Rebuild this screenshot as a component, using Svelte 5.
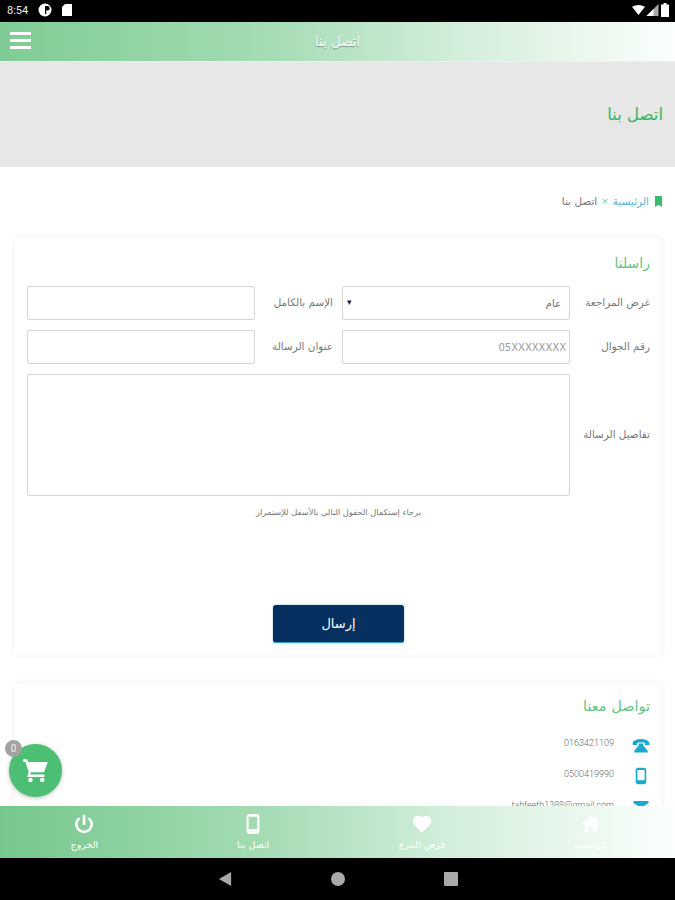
<script>
  let contacts = [
    { kind: "phone", value: "0163421109" },
    { kind: "mobile", value: "0500419990" },
    { kind: "mail", value: "tahfeeth1388@gmail.com" }
  ];
  let tabs = [
    { kind: "home", label: "الرئيسية" },
    { kind: "heart", label: "فرص التبرع" },
    { kind: "mobile", label: "اتصل بنا" },
    { kind: "power", label: "الخروج" }
  ];
</script>

{#snippet icon(kind)}
  {#if kind == "home"}
    <svg viewBox="0 0 24 24"><path d="M10 21v-6h4v6h5v-8.500h3L18.500 9.300V5h-2.500v2L12 3 2 12.500h3V21z"/></svg>
  {:else if kind == "heart"}
    <svg viewBox="0 0 24 24"><path d="M12 21.3l-1.500-1.300C5.400 15.400 2 12.300 2 8.500 2 5.400 4.400 3 7.500 3c1.700 0 3.400.8 4.500 2.100C13.100 3.800 14.800 3 16.500 3 19.600 3 22 5.400 22 8.500c0 3.800-3.400 6.900-8.500 11.500z"/></svg>
  {:else if kind == "mobile"}
    <svg viewBox="0 0 24 24"><path fill-rule="evenodd" d="M8 1h8c1.700 0 3 1.300 3 3v16c0 1.700-1.300 3-3 3H8c-1.700 0-3-1.300-3-3V4c0-1.700 1.300-3 3-3zM7.200 4v13.500h9.600V4z"/></svg>
  {:else if kind == "power"}
    <svg viewBox="0 0 24 24"><path d="M13.500 2h-3v11h3zm4.500 2.500l-2 2A7 7 0 1 1 8 6.500l-2-2a9.800 9.800 0 1 0 12 0z"/></svg>
  {:else if kind == "phone"}
    <svg viewBox="0 0 24 24"><path d="M12 4C7 4 3.500 5.500 1 8v4h5.500V9.200c1.700-.5 3.500-.7 5.500-.7s3.800.2 5.500.7V12H23V8c-2.500-2.500-6-4-11-4z"/><path d="M9 10h6v2.500l6 7V22H3v-2.500l6-7z"/></svg>
  {:else if kind == "mail"}
    <svg viewBox="0 0 24 24"><path d="M2 4h20v2.500l-10 7-10-7zM2 9.500l10 7 10-7V21H2z"/></svg>
  {/if}
{/snippet}

<div class="screen">
  <div class="status">
    <span class="clock">8:54</span>
    <svg class="st" viewBox="0 0 14 14"><circle cx="7" cy="7" r="6.500" fill="#fff"/><path d="M7 3h2.500a2 2 0 0 1 0 4.500H8.200V11H7z" fill="#000"/></svg>
    <svg class="st" viewBox="0 0 14 14"><path d="M5 1h7v12H2V4z" fill="#fff"/></svg>
    <span class="grow"></span>
    <svg class="wifi" viewBox="0 0 14 12"><path d="M0 2.500Q7-1.500 14 2.500L7 11.500z" fill="#fff"/></svg>
    <svg class="wifi" viewBox="0 0 12 12"><path d="M12 0v12H0z" fill="#aaa"/><path d="M7 5v7H0z" fill="#fff"/></svg>
    <svg class="batt" viewBox="0 0 8 14"><path d="M2.500 0h3v1.500H8V14H0V1.500h2.500z" fill="#fff"/></svg>
  </div>

  <header class="topbar">
    <div class="burger"><i></i><i></i><i></i></div>
    <span class="toptitle">اتصل بنا</span>
  </header>

  <main>
    <section class="hero"><h1>اتصل بنا</h1></section>

    <nav class="crumbs">
      <svg viewBox="0 0 10 12"><path d="M1 0h8v12L5 9.500 1 12z" fill="#3dbb6c"/></svg>
      <span class="home">الرئيسية</span>
      <span class="sep">×</span>
      <span>اتصل بنا</span>
    </nav>

    <section class="card form-card">
      <h2>راسلنا</h2>
      <div class="form">
        <label for="kind">غرض المراجعة</label>
        <div class="selectbox">
          <select id="kind"><option>عام</option></select>
          <span class="arrow">▾</span>
        </div>
        <label for="fullname">الإسم بالكامل</label>
        <input id="fullname" />

        <label for="mobile">رقم الجوال</label>
        <input id="mobile" class="mobile" placeholder="05XXXXXXXX" />
        <label for="subject">عنوان الرسالة</label>
        <input id="subject" />

        <label for="details">تفاصيل الرسالة</label>
        <textarea id="details"></textarea>
      </div>
      <p class="hint">برجاء إستكمال الحقول التالي بالأسفل للإستمرار</p>
      <div class="actions"><button>إرسال</button></div>
    </section>

    <section class="card contact-card">
      <h2>تواصل معنا</h2>
      {#each contacts as c}
        <div class="contact">
          <span class="cicon">{@render icon(c.kind)}</span>
          <span class="cval">{c.value}</span>
        </div>
      {/each}
    </section>
  </main>

  <div class="cart">
    <svg viewBox="0 0 24 24"><path d="M1 2h3.500l1 2.500H23l-3.500 9H8l-.7 2H20v2.200H4.500L6 13.500 3 4.200H1z" fill="#fff"/><circle cx="7.500" cy="20.500" r="2" fill="#fff"/><circle cx="18" cy="20.500" r="2" fill="#fff"/></svg>
    <span class="badge">0</span>
  </div>

  <footer class="tabs">
    {#each tabs as t}
      <div class="tab">
        {@render icon(t.kind)}
        <span>{t.label}</span>
      </div>
    {/each}
  </footer>

  <div class="androidnav">
    <svg viewBox="0 0 14 16"><path d="M14 0v16L0 8z" fill="#a9a9a9"/></svg>
    <svg viewBox="0 0 14 14"><circle cx="7" cy="7" r="7" fill="#a9a9a9"/></svg>
    <svg viewBox="0 0 14 14"><rect width="14" height="14" rx="1" fill="#a9a9a9"/></svg>
  </div>
</div>

<style>
  :global(body) {
    margin: 0;
    background: #fff;
  }
  .screen {
    position: relative;
    width: 675px;
    height: 900px;
    display: flex;
    flex-direction: column;
    overflow: hidden;
    font-family: "DejaVu Sans", "Noto Sans", sans-serif;
    color: #666;
  }
  .status {
    height: 22px;
    flex: none;
    background: #000;
    display: flex;
    align-items: center;
    padding: 0 6px 2px 7px;
    box-sizing: border-box;
    gap: 8px;
    color: #eee;
  }
  .clock {
    font: 11px "Roboto", sans-serif;
    margin-right: 2px;
  }
  .st {
    width: 14px;
    height: 14px;
  }
  .grow {
    flex: 1;
  }
  .wifi {
    width: 13px;
    height: 12px;
    margin-right: -7px;
  }
  .batt {
    width: 8px;
    height: 14px;
    margin-left: 1px;
  }
  .topbar {
    height: 40px;
    flex: none;
    display: flex;
    align-items: center;
    justify-content: center;
    position: relative;
    background: linear-gradient(90deg, #7fcb95, #a5dcb4 40%, #d3eeda 68%, #fbfefc);
    border-bottom: 1px solid #e9f1ec;
    box-sizing: border-box;
  }
  .burger {
    position: absolute;
    left: 10px;
    top: 10px;
    display: flex;
    flex-direction: column;
    gap: 4px;
  }
  .burger i {
    display: block;
    width: 21px;
    height: 3px;
    background: #fff;
  }
  .toptitle {
    color: #fff;
    font-size: 13.5px;
    text-shadow: 0 1px 1px #7a9a84;
    margin-top: -1px;
  }
  main {
    flex: 1;
    min-height: 0;
    overflow: hidden;
    direction: rtl;
  }
  .hero {
    height: 105px;
    box-sizing: border-box;
    background: #e7e7e7;
    display: flex;
    align-items: center;
    padding: 0 12px;
  }
  h1 {
    margin: 0;
    font-size: 16.5px;
    font-weight: 400;
    color: #35b566;
  }
  .crumbs {
    height: 71px;
    box-sizing: border-box;
    display: flex;
    align-items: center;
    gap: 4px;
    padding: 0 12px 3px;
    font-size: 10.5px;
    color: #777;
  }
  .crumbs svg {
    width: 9px;
    height: 11px;
    margin-left: 1px;
  }
  .home {
    color: #55b4d6;
  }
  .sep {
    color: #7cc795;
    font-size: 9px;
  }
  .card {
    margin: 0 14px 0 15px;
    padding: 0 11px;
    background: #fff;
    box-shadow: 0 0 8px rgba(0, 0, 0, 0.06);
  }
  h2 {
    margin: 0;
    font-size: 14px;
    font-weight: 400;
    color: #61c585;
  }
  .form-card {
    height: 417px;
    box-sizing: border-box;
    padding-top: 17px;
    display: flex;
    flex-direction: column;
  }
  .form-card h2 {
    height: 31px;
  }
  .form {
    display: grid;
    grid-template-columns: 80px 228px 87px 228px;
    grid-auto-rows: 34px;
    row-gap: 10px;
    width: 623px;
  }
  label {
    font-size: 10.4px;
    color: #777;
    align-self: center;
    padding-bottom: 2px;
  }
  label:nth-of-type(even) {
    padding-right: 9px;
  }
  input,
  textarea,
  select {
    width: 100%;
    height: 100%;
    box-sizing: border-box;
    margin: 0;
    border: 1px solid #d6d6d6;
    border-radius: 2px;
    background: #fff;
    box-shadow: inset 0 0 3px rgba(0, 0, 0, 0.03);
    font: 10px "DejaVu Sans", sans-serif;
    color: #666;
    outline: none;
    display: block;
  }
  input::placeholder {
    color: #999;
    opacity: 1;
  }
  input.mobile {
    padding: 0 3px;
  }
  textarea {
    grid-column: 2 / 5;
    grid-row: span 1;
    height: 122px;
    resize: none;
  }
  .form label:last-of-type {
    align-self: start;
    margin-top: 54px;
  }
  .selectbox {
    position: relative;
  }
  select {
    appearance: none;
    padding: 0 8px;
  }
  .arrow {
    position: absolute;
    left: 5px;
    top: 10px;
    font-size: 9px;
    line-height: 12px;
    color: #222;
  }
  .hint {
    margin: 99px 0 0;
    width: 623px;
    box-sizing: border-box;
    text-align: center;
    font-size: 8.3px;
    color: #777;
  }
  .actions {
    margin-top: 88px;
    width: 623px;
    display: flex;
    justify-content: center;
  }
  button {
    width: 131px;
    height: 38px;
    padding: 0;
    border: 0;
    border-bottom: 1px solid #2aa3c4;
    border-radius: 3px;
    background: #06305f;
    color: #fff;
    font: 13px "DejaVu Sans", sans-serif;
    box-shadow: 0 0 2px #5fb9cf;
  }
  .contact-card {
    margin-top: 28px;
    padding-top: 15px;
    height: 300px;
    box-sizing: border-box;
  }
  .contact-card h2 {
    font-size: 14.5px;
    height: 31px;
  }
  .contact {
    display: flex;
    align-items: center;
    height: 31px;
    gap: 18px;
    color: #666;
    font-size: 9px;
  }
  .cicon {
    width: 18px;
    height: 20px;
    fill: #18a9cf;
  }
  .cicon svg {
    display: block;
    width: 18px;
    height: 20px;
  }
  .cval {
    direction: ltr;
    font-family: "Roboto", sans-serif;
    font-weight: 300;
    margin-top: -3px;
  }
  .cart {
    position: absolute;
    left: 9px;
    top: 744px;
    width: 53px;
    height: 53px;
    border-radius: 50%;
    background: #4cbf74;
    box-shadow: 0 1px 4px rgba(0, 0, 0, 0.25);
    display: flex;
    align-items: center;
    justify-content: center;
  }
  .cart svg {
    width: 27px;
    height: 27px;
  }
  .badge {
    position: absolute;
    left: -4px;
    top: -4px;
    width: 17px;
    height: 17px;
    border-radius: 50%;
    background: #a3a3a3;
    color: #eee;
    font: 10px/17px "Roboto", sans-serif;
    text-align: center;
  }
  .tabs {
    height: 52px;
    flex: none;
    display: grid;
    grid-template-columns: repeat(4, 1fr);
    direction: rtl;
    background: linear-gradient(90deg, #76c78e, #a6dcb5 40%, #d2eeda 66%, #fbfefc);
    box-sizing: border-box;
    position: relative;
  }
  .tab {
    display: flex;
    flex-direction: column;
    align-items: center;
    padding-top: 7px;
    fill: #fff;
    color: #fff;
    font-size: 9.5px;
    line-height: 13px;
    gap: 3px;
  }
  .tab svg {
    width: 22px;
    height: 22px;
  }
  .androidnav {
    height: 42px;
    flex: none;
    background: #000;
    display: flex;
    align-items: center;
    justify-content: center;
    gap: 99px;
  }
  .androidnav svg {
    width: 14px;
    height: 14px;
  }
</style>
